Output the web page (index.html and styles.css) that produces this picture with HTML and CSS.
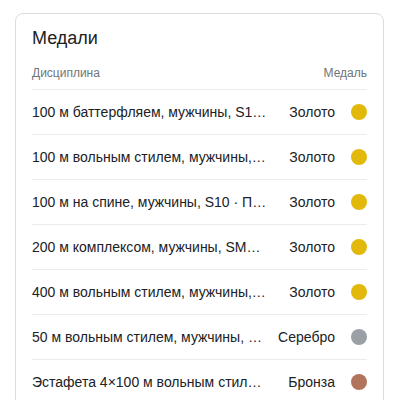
FILE: index.html
```html
<!DOCTYPE html>
<html lang="ru">
<head>
<meta charset="utf-8">
<link rel="stylesheet" href="styles.css">
</head>
<body>
<div class="card">
  <div class="title">Медали</div>
  <div class="head">
    <span>Дисциплина</span>
    <span>Медаль</span>
  </div>
  <div class="row"><span class="name">100 м баттерфляем, мужчины, S13 · Паралимпийские игры</span><span class="medal">Золото</span><span class="dot gold"></span></div>
  <div class="row"><span class="name">100 м вольным стилем, мужчины, S13</span><span class="medal">Золото</span><span class="dot gold"></span></div>
  <div class="row"><span class="name">100 м на спине, мужчины, S10 · Паралимпийские игры</span><span class="medal">Золото</span><span class="dot gold"></span></div>
  <div class="row"><span class="name">200 м комплексом, мужчины, SM13 · Паралимпийские игры</span><span class="medal">Золото</span><span class="dot gold"></span></div>
  <div class="row"><span class="name">400 м вольным стилем, мужчины, S13</span><span class="medal">Золото</span><span class="dot gold"></span></div>
  <div class="row"><span class="name">50 м вольным стилем, мужчины, S13</span><span class="medal">Серебро</span><span class="dot silver"></span></div>
  <div class="row"><span class="name">Эстафета 4×100 м вольным стилем, мужчины</span><span class="medal">Бронза</span><span class="dot bronze"></span></div>
</div>
</body>
</html>
```
FILE: styles.css
```css
html, body {
  margin: 0;
  padding: 0;
  background: #fff;
}
body {
  font-family: Arial, "Liberation Sans", sans-serif;
  color: #202124;
  height: 400px;
  overflow: hidden;
}
.card {
  margin: 13px 0 0 15px;
  width: 369px;
  box-sizing: border-box;
  border: 1px solid #dadce0;
  border-radius: 8px;
  padding: 12px 16px 0 16px;
  height: 420px;
}
.title {
  font-size: 18px;
  line-height: 24px;
  color: #202124;
}
.head {
  display: flex;
  justify-content: space-between;
  font-size: 12px;
  line-height: 16px;
  color: #70757a;
  padding: 15px 0 8px;
  border-bottom: 1px solid #ebebeb;
}
.row {
  display: flex;
  align-items: center;
  height: 44px;
  border-bottom: 1px solid #ebebeb;
  font-size: 14px;
}
.name {
  flex: none;
  width: 235px;
  white-space: nowrap;
  overflow: hidden;
  text-overflow: ellipsis;
}
.medal {
  margin-left: auto;
  white-space: nowrap;
}
.dot {
  width: 16px;
  height: 16px;
  border-radius: 50%;
  margin-left: 16px;
  flex: none;
}
.gold { background: #e2b90b; }
.silver { background: #9aa0a6; }
.bronze { background: #b1735b; }
```
